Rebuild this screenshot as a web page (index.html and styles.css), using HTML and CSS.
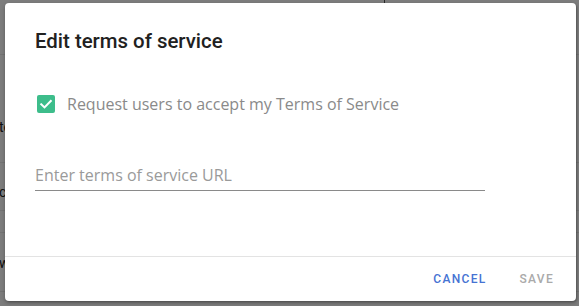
FILE: index.html
```html
<!DOCTYPE html>
<html lang="en">
<head>
<meta charset="utf-8">
<title>Edit terms of service</title>
<link rel="stylesheet" href="styles.css">
</head>
<body>
<div class="page">
  <div class="row row-head"><div class="cell"></div><div class="cell cell-right"></div></div>
  <div class="row row-a"><span class="frag frag-t">text</span></div>
  <div class="row row-b"><span class="frag frag-c">contact</span></div>
  <div class="row row-c"></div>
  <div class="row row-d"><span class="frag frag-w">website</span></div>
  <div class="row row-e"></div>
</div>
<div class="backdrop"></div>
<div class="dialog" role="dialog" aria-labelledby="dlg-title">
  <div class="dialog-header">
    <h2 id="dlg-title" class="dialog-title">Edit terms of service</h2>
  </div>
  <div class="dialog-body">
    <label class="check-row">
      <span class="checkbox">
        <svg viewBox="0 0 18 18" width="18" height="18" aria-hidden="true">
          <path d="M4.2 9.3 L7.5 12.4 L13.8 5.9" fill="none" stroke="#ffffff" stroke-width="2" stroke-linecap="square" stroke-linejoin="miter"/>
        </svg>
      </span>
      <span class="check-label">Request users to accept my Terms of Service</span>
    </label>
    <div class="field">
      <input class="field-input" type="text" placeholder="Enter terms of service URL">
    </div>
  </div>
  <div class="dialog-footer">
    <button class="btn btn-primary" type="button">Cancel</button>
    <button class="btn btn-disabled" type="button">Save</button>
  </div>
</div>
</body>
</html>
```
FILE: styles.css
```css
* { box-sizing: border-box; }
html, body { margin: 0; padding: 0; }
body {
  width: 579px;
  height: 306px;
  overflow: hidden;
  font-family: Roboto, "Liberation Sans", sans-serif;
  background: #ffffff;
  position: relative;
}

/* underlying page */
.page {
  display: flex;
  flex-direction: column;
  background: #fafafa;
  height: 306px;
}
.row {
  border-bottom: 1px solid #e6e6e6;
  display: flex;
  align-items: flex-start;
  font-size: 14px;
  color: #222;
}
.row-head { height: 55px; display: grid; grid-template-columns: 384px 1fr; }
.cell-right { border-left: 1px solid #555; height: 6px; }
.row-a { height: 108px; }
.row-b { height: 48px; }
.row-c { height: 22px; }
.row-d { height: 59px; }
.row-e { flex: 1; border-bottom: none; }
.frag { display: block; margin-left: -1px; line-height: 16px; }
.frag-t { padding-top: 64px; }
.frag-c { padding-top: 21px; }
.frag-w { padding-top: 22px; }

.backdrop {
  position: absolute;
  inset: 0;
  background: rgba(0, 0, 0, 0.5);
}

/* dialog */
.dialog {
  position: absolute;
  left: 5px;
  top: 3px;
  width: 571px;
  height: 298px;
  background: #ffffff;
  border-radius: 4px;
  box-shadow: 0 2px 4px rgba(0, 0, 0, 0.25), 1px 1px 2px rgba(0, 0, 0, 0.2);
  display: flex;
  flex-direction: column;
}
.dialog-header { padding: 26px 30px 0; }
.dialog-title {
  margin: 0;
  font-size: 20.4px;
  line-height: 24px;
  font-weight: 500;
  color: #212121;
}
.dialog-body {
  flex: 1;
  padding: 39px 30px 0;
}
.check-row {
  display: flex;
  align-items: center;
  gap: 12px;
  height: 24px;
  padding-left: 2px;
}
.checkbox {
  width: 18px;
  height: 18px;
  border-radius: 2px;
  background: #3dbd8b;
  display: flex;
}
.check-label {
  font-family: "Open Sans", Roboto, sans-serif;
  font-size: 16px;
  color: #8a8a8a;
}
.field {
  margin-top: 47px;
  width: 450px;
}
.field-input {
  display: block;
  width: 100%;
  border: none;
  border-bottom: 1px solid #8a8a8a;
  padding: 0 0 3px;
  font-family: "Open Sans", Roboto, sans-serif;
  font-size: 16px;
  line-height: 24px;
  height: 28px;
  color: #333;
  outline: none;
  background: transparent;
}
.field-input::placeholder { color: #9a9a9a; }

.dialog-footer {
  height: 45px;
  border-top: 1px solid #e3e3e3;
  display: flex;
  justify-content: flex-end;
  align-items: center;
  gap: 18px;
  padding-right: 15px;
}
.btn {
  border: none;
  background: transparent;
  font-family: Roboto, "Liberation Sans", sans-serif;
  font-size: 12px;
  font-weight: 500;
  letter-spacing: 1.3px;
  text-transform: uppercase;
  padding: 8px 7px 8px 8px;
  line-height: 16px;
}
.btn-primary { color: #4673d3; }
.btn-disabled { color: #aaaaaa; }
```
